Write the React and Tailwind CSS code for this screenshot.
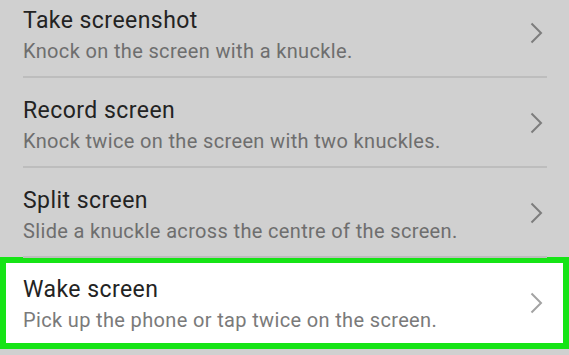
import React from "react";

const rows = [
  { t: "Take screenshot", s: "Knock on the screen with a knuckle." },
  { t: "Record screen", s: "Knock twice on the screen with two knuckles." },
  { t: "Split screen", s: "Slide a knuckle across the centre of the screen." },
];

function Chevron({ color }) {
  return (
    <svg width="13" height="22" viewBox="0 0 13 22" className="shrink-0">
      <path d="M1.5 1.5 L11 11 L1.5 20.5" fill="none" stroke={color} strokeWidth="2" />
    </svg>
  );
}

function Texts({ t, s, sub }) {
  return (
    <div className="flex-1 self-start">
      <div className="text-[23px] leading-[28px] tracking-[0.45px] text-[#232323]">{t}</div>
      <div className={`text-[20px] leading-[32px] tracking-[0.35px] ${sub}`}>{s}</div>
    </div>
  );
}

function Row({ t, s }) {
  return (
    <div className="flex h-[90px] flex-col">
      <div className="flex flex-1 items-center pl-[23px] pr-[26px] pt-[19px]">
        <Texts t={t} s={s} sub="text-[#6e6e6e]" />
        <div className="-mt-[17px] flex items-center">
          <Chevron color="#7d7d7d" />
        </div>
      </div>
      <div className="ml-[23px] mr-[22px] h-[2px] bg-[#bdbdbd]" />
    </div>
  );
}

export default function App() {
  return (
    <div
      className="h-[355px] w-[569px] overflow-hidden bg-[#d0d0d0]"
      style={{ fontFamily: "Roboto, 'Noto Sans', sans-serif" }}
    >
      <div className="-mt-[12px]">
        {rows.map((r) => (
          <Row key={r.t} {...r} />
        ))}
        <div className="-mt-[1px] flex h-[92px] items-center border-[6px] border-[#16e416] bg-white pl-[17px] pr-[20px] pt-[13px]">
          <Texts t="Wake screen" s="Pick up the phone or tap twice on the screen." sub="text-[#7a7a7a]" />
          <div className="-mt-[13px] flex items-center">
            <Chevron color="#a3a3a3" />
          </div>
        </div>
      </div>
    </div>
  );
}
